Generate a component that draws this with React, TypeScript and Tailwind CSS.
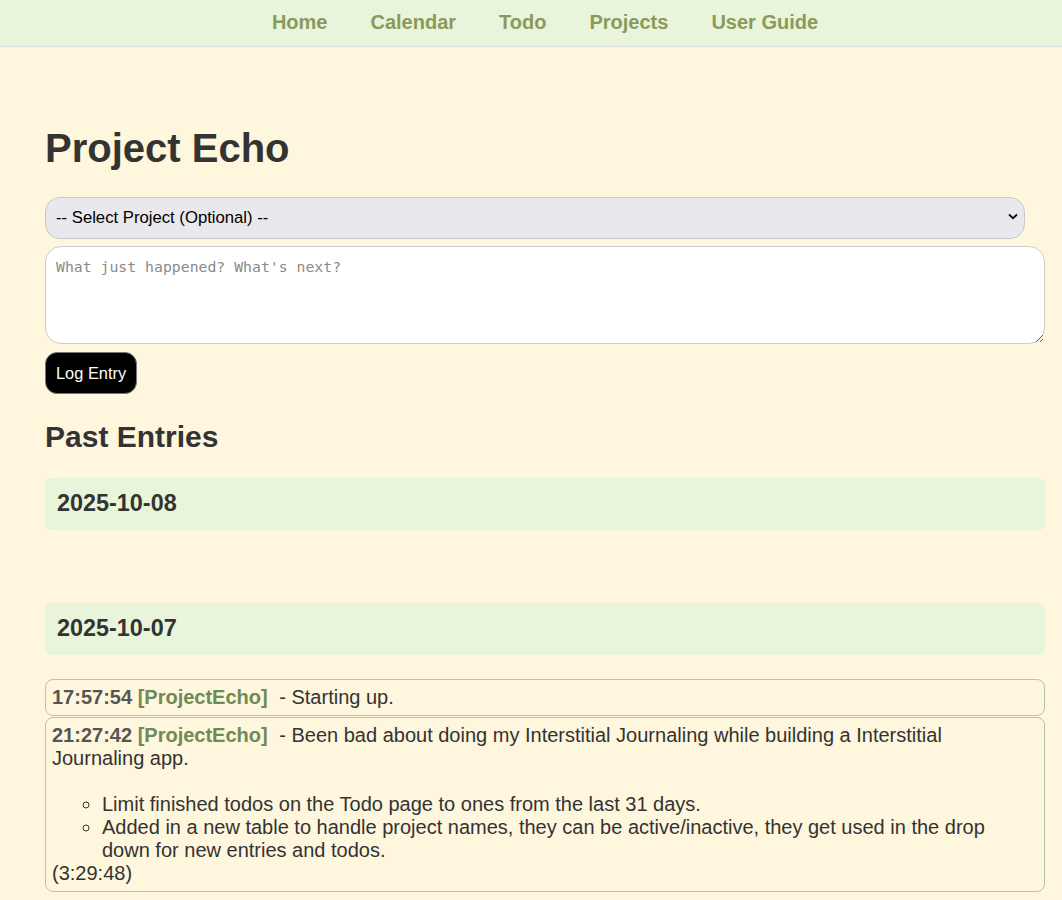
import React from "react";

const navItems = ["Home", "Calendar", "Todo", "Projects", "User Guide"];

function Entry({
  time,
  project,
  children,
}: {
  time: string;
  project: string;
  children: React.ReactNode;
}) {
  return (
    <div className="border border-[#b7c99f] rounded-[8px] px-[6px] py-[6px] mb-[1px] text-[20px] leading-[23px] text-[#333333]">
      <span className="font-bold text-[#555555]">{time}</span>{" "}
      <span className="font-bold text-[#6f8a55] mr-[6px]">[{project}]</span>{" "}
      {children}
    </div>
  );
}

export default function App() {
  return (
    <div
      className="min-h-[900px] bg-[#fef6dd] text-[#333333]"
      style={{ fontFamily: '"Liberation Sans", Arial, sans-serif' }}
    >
      <nav className="h-[47px] bg-[#e8f5da] border-b border-[#dcdde6] flex items-center justify-center gap-[43px] pl-[28px] pb-[2px]">
        {navItems.map((n) => (
          <a key={n} className="text-[20px] font-bold text-[#8a9a5b] leading-[23px]">
            {n}
          </a>
        ))}
      </nav>

      <main className="ml-[45px] w-[1000px]">
        <h1 className="mt-[78px] text-[40px] leading-[46px] font-bold text-[#333333]">
          Project Echo
        </h1>

        <div className="relative mt-[26px] w-[980px]">
          <select className="appearance-none w-[980px] h-[42px] rounded-[15px] border border-[#c8c8cc] bg-[#e9e8ec] pl-[10px] text-[16.7px] text-black outline-none">
            <option>-- Select Project (Optional) --</option>
          </select>
          <svg
            className="absolute right-[7px] top-[16px] pointer-events-none"
            width="10"
            height="7"
            viewBox="0 0 10 7"
          >
            <path d="M1 1.5 L5 5.2 L9 1.5" fill="none" stroke="#111" strokeWidth="1.8" />
          </svg>
        </div>

        <textarea
          className="block mt-[7px] w-[1000px] h-[98px] rounded-[16px] border border-[#cccccc] bg-white px-[10px] pt-[11px] text-[14.8px] leading-[17px] placeholder:text-[#8a8a8a] outline-none"
          style={{ fontFamily: '"DejaVu Sans Mono", "Liberation Mono", monospace' }}
          placeholder="What just happened? What's next?"
        />

        <button className="block mt-[8px] h-[42px] rounded-[12px] border border-[#777777] bg-black px-[10px] text-[16.4px] text-white">
          Log Entry
        </button>

        <h2 className="mt-[26px] text-[30px] leading-[34px] font-bold text-[#333333]">
          Past Entries
        </h2>

        <div className="mt-[24px]">
          <div className="h-[52px] rounded-[6px] bg-[#e8f5da] flex items-center pl-[12px]">
            <h3 className="text-[23.4px] font-bold text-[#333333]">2025-10-08</h3>
          </div>
        </div>

        <div className="mt-[73px]">
          <div className="h-[52px] rounded-[6px] bg-[#e8f5da] flex items-center pl-[12px]">
            <h3 className="text-[23.4px] font-bold text-[#333333]">2025-10-07</h3>
          </div>
          <div className="mt-[24px]">
            <Entry time="17:57:54" project="ProjectEcho">
              - Starting up.
            </Entry>
            <Entry time="21:27:42" project="ProjectEcho">
              - Been bad about doing my Interstitial Journaling while building a Interstitial
              Journaling app.
              <br />
              <br />
              <ul className="list-[circle] pl-[50px]">
                <li>Limit finished todos on the Todo page to ones from the last 31 days.</li>
                <li>
                  Added in a new table to handle project names, they can be active/inactive, they
                  get used in the drop down for new entries and todos.
                </li>
              </ul>
              (3:29:48)
            </Entry>
          </div>
        </div>
      </main>
    </div>
  );
}
